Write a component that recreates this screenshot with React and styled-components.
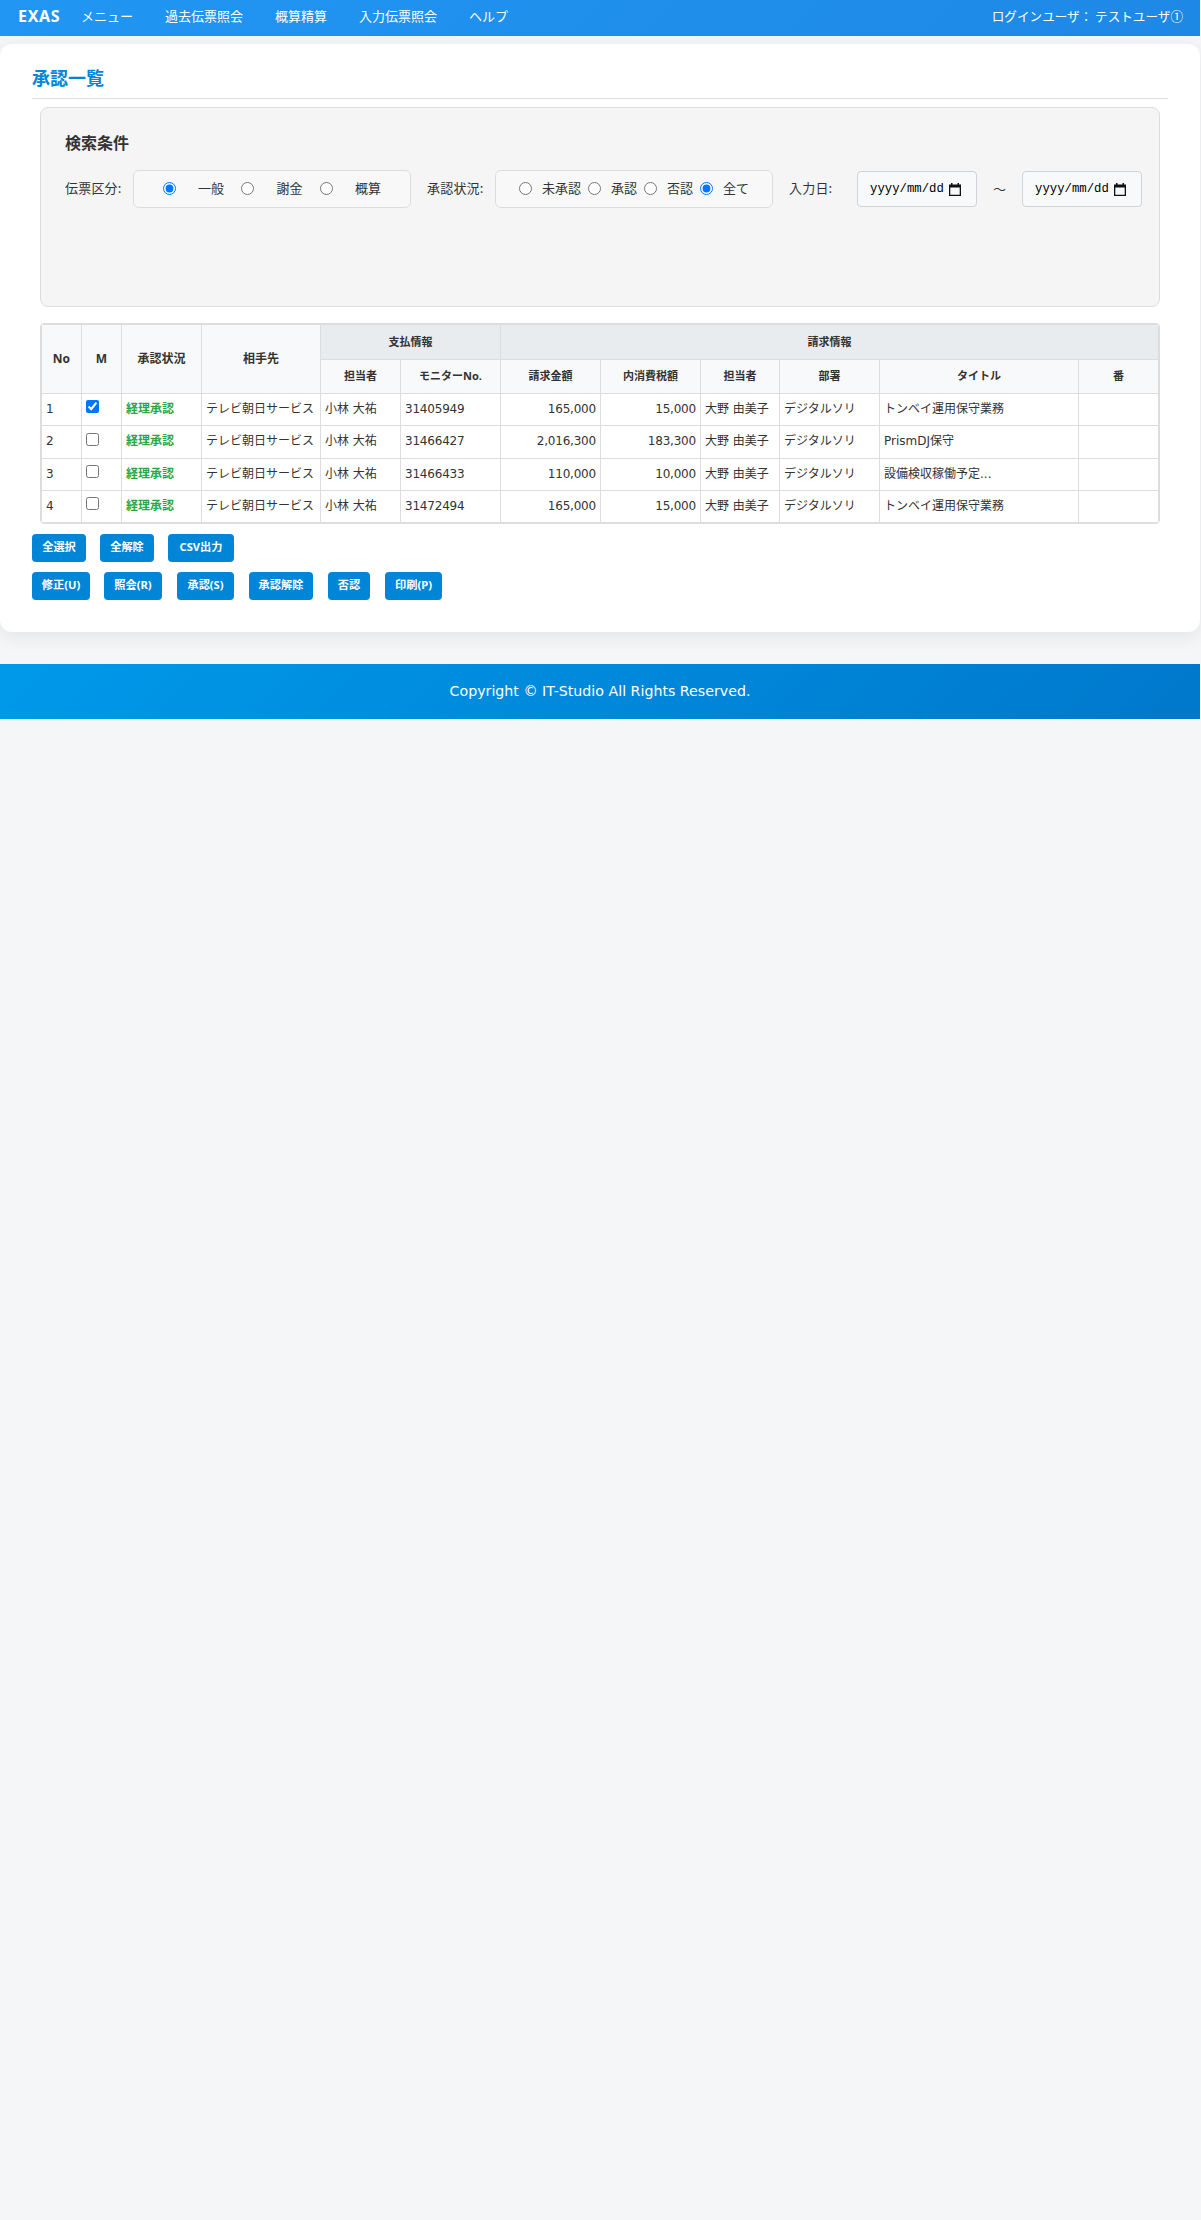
import React from 'react';
import styled, { createGlobalStyle } from 'styled-components';

const cjk = '"Noto Sans CJK JP", sans-serif';

const GlobalStyle = createGlobalStyle`
  * { box-sizing: border-box; }
  body {
    margin: 0;
    background: #f5f6f8;
    color: #333;
    font-family: "DejaVu Sans", ${cjk};
    font-size: 13px;
  }
`;

const Page = styled.div`
  width: 1200px;
  display: flex;
  flex-direction: column;
`;

const Header = styled.header`
  height: 36px;
  padding: 0 17px 4px 18px;
  display: flex;
  align-items: center;
  color: #fff;
  background: linear-gradient(135deg, #2196f3, #1e88e5);
  white-space: nowrap;
`;

const Brand = styled.div`
  width: 63px;
  font: 700 16px/32px "Noto Sans", sans-serif;
  letter-spacing: 0.7px;
`;

const Nav = styled.nav`
  display: flex;
  gap: 32px;
  flex: 1;
`;

const NavItem = styled.a`
  font: 400 13px/32px ${cjk};
`;

const LoginUser = styled.div`
  font: 400 12.6px/32px ${cjk};
  white-space: pre;
`;

const Card = styled.main`
  margin-top: 8px;
  height: 588px;
  padding: 0 32px;
  background: #fff;
  border-radius: 12px;
  box-shadow: 0 4px 20px rgba(0, 0, 0, 0.08);
`;

const Title = styled.h1`
  margin: 0 0 8px;
  height: 55px;
  padding-top: 18px;
  border-bottom: 1px solid #ddd;
  color: #0085d7;
  font: 700 18px/30px ${cjk};
`;

const SearchPanel = styled.section`
  margin: 0 8px;
  height: 200px;
  padding: 22px 17px 0 24px;
  border: 1px solid #ddd;
  border-radius: 8px;
  background: #f5f5f5;
`;

const PanelTitle = styled.h2`
  margin: 0 0 16px;
  font: 700 16px/24px ${cjk};
`;

const SearchRow = styled.div`
  display: flex;
  align-items: center;
  height: 38px;
  white-space: nowrap;
`;

const FieldLabel = styled.span`
  width: ${(p) => p.$width}px;
  padding-bottom: 2px;
  font: 400 13px/20px ${cjk};
  letter-spacing: 0.2px;
`;

const RadioBox = styled.div`
  width: 278px;
  height: 38px;
  margin-right: 16px;
  padding: 0 ${(p) => p.$pad}px 2px;
  display: flex;
  align-items: center;
  justify-content: space-between;
  border: 1px solid #ddd;
  border-radius: 6px;
  background: #f8f8f8;
`;

const RadioOption = styled.label`
  display: flex;
  align-items: center;
  gap: ${(p) => p.$gap}px;
  font: 400 13px/20px ${cjk};
  input {
    width: 13px;
    height: 13px;
    margin: 0;
  }
`;

const DateField = styled.div`
  width: 120px;
  height: 36px;
  padding: 0 15px 0 12px;
  display: flex;
  align-items: center;
  justify-content: space-between;
  border: 1px solid #ced4da;
  border-radius: 4px;
  background: #f8f9fa;
  color: #000;
  font: 400 12.3px/20px "Liberation Mono", monospace;
`;

const Tilde = styled.span`
  width: 45px;
  text-align: center;
  font: 400 13px/20px ${cjk};
`;

const TableFrame = styled.div`
  margin: 16px 8px 10px;
  border: 1px solid #ddd;
  border-radius: 4px;
  overflow: hidden;
`;

const Table = styled.table`
  width: 1118px;
  table-layout: fixed;
  border-collapse: separate;
  border-spacing: 0;
  border-left: 1px solid #ddd;
  border-top: 1px solid #ddd;
`;

const HeadRow = styled.tr`
  height: ${(p) => p.$height}px;
`;

const Th = styled.th`
  padding: 0 0 1px;
  border-right: 1px solid #ddd;
  border-bottom: 1px solid #ddd;
  background: ${(p) => (p.$group ? '#e9ecef' : '#f8f9fa')};
  font: 700 ${(p) => (p.rowSpan ? 12 : 11)}px/18px "Noto Sans", ${cjk};
`;

const BodyRow = styled.tr`
  height: ${(p) => p.$height}px;
`;

const Td = styled.td`
  padding: 0 4px 2px;
  border-right: 1px solid #ddd;
  border-bottom: 1px solid #ddd;
  font-size: 12px;
  line-height: 20px;
  letter-spacing: ${(p) => (p.$latin ? '-0.2px' : '0')};
  text-align: ${(p) => (p.$right ? 'right' : 'left')};
  white-space: nowrap;
`;

const Status = styled.span`
  color: #28a745;
  font-weight: 700;
`;

const Check = styled.input`
  display: block;
  width: 13px;
  height: 13px;
  margin: 0 0 4px;
`;

const ButtonRow = styled.div`
  display: flex;
  margin-bottom: 10px;
`;

const Button = styled.button`
  width: ${(p) => p.$width}px;
  height: 28px;
  margin-right: ${(p) => p.$after || 14}px;
  padding: 0 0 2px;
  border: 0;
  border-radius: 4px;
  background: #0085d7;
  color: #fff;
  font: 700 11.2px/20px "Noto Sans", ${cjk};
  white-space: nowrap;
`;

const Footer = styled.footer`
  margin-top: 32px;
  height: 55px;
  text-align: center;
  color: #fff;
  background: linear-gradient(135deg, #0099e9, #0078cc);
  font-size: 14.2px;
  line-height: 54px;
`;

const CalendarIcon = () => (
  <svg width="12" height="13" viewBox="0 0 12 13">
    <path d="M2 0h1.5v1.5h5V0H10v1.5h2V13H0V1.5h2zM1.3 4.5v7.2h9.4V4.5z" fill="#111" fillRule="evenodd" />
  </svg>
);

const DateInput = () => (
  <DateField>
    <span>yyyy/mm/dd</span>
    <CalendarIcon />
  </DateField>
);

const menu = ['メニュー', '過去伝票照会', '概算精算', '入力伝票照会', 'ヘルプ'];
const columns = [40, 40, 80, 119, 80, 100, 100, 100, 79, 100, 199, 80];
const subHeads = ['担当者', 'モニターNo.', '請求金額', '内消費税額', '担当者', '部署', 'タイトル', '番'];
const rows = [
  { no: '31405949', amount: '165,000', tax: '15,000', title: 'トンベイ運用保守業務', height: 32 },
  { no: '31466427', amount: '2,016,300', tax: '183,300', title: 'PrismDJ保守', height: 33 },
  { no: '31466433', amount: '110,000', tax: '10,000', title: '設備検収稼働予定...', height: 32 },
  { no: '31472494', amount: '165,000', tax: '15,000', title: 'トンベイ運用保守業務', height: 32 },
];

function Radios({ name, options, selected, gap, pad }) {
  return (
    <RadioBox $pad={pad}>
      {options.map((o) => (
        <RadioOption key={o} $gap={gap}>
          <input type="radio" name={name} defaultChecked={o === selected} />
          {o}
        </RadioOption>
      ))}
    </RadioBox>
  );
}

export default function App() {
  return (
    <Page>
      <GlobalStyle />
      <Header>
        <Brand>EXAS</Brand>
        <Nav>{menu.map((m) => <NavItem key={m}>{m}</NavItem>)}</Nav>
        <LoginUser>{'ログインユーザ： テストユーザ①'}</LoginUser>
      </Header>
      <Card>
        <Title>承認一覧</Title>
        <SearchPanel>
          <PanelTitle>検索条件</PanelTitle>
          <SearchRow>
            <FieldLabel $width={68}>伝票区分:</FieldLabel>
            <Radios name="kind" options={['一般', '謝金', '概算']} selected="一般" gap={22} pad={29} />
            <FieldLabel $width={68}>承認状況:</FieldLabel>
            <Radios name="state" options={['未承認', '承認', '否認', '全て']} selected="全て" gap={10} pad={23} />
            <FieldLabel $width={68}>入力日:</FieldLabel>
            <DateInput />
            <Tilde>～</Tilde>
            <DateInput />
          </SearchRow>
        </SearchPanel>
        <TableFrame>
          <Table>
            <colgroup>{columns.map((w, i) => <col key={i} style={{ width: w }} />)}</colgroup>
            <thead>
              <HeadRow $height={35}>
                <Th rowSpan={2}>No</Th>
                <Th rowSpan={2}>M</Th>
                <Th rowSpan={2}>承認状況</Th>
                <Th rowSpan={2}>相手先</Th>
                <Th $group colSpan={2}>支払情報</Th>
                <Th $group colSpan={6}>請求情報</Th>
              </HeadRow>
              <HeadRow $height={34}>{subHeads.map((h, i) => <Th key={i}>{h}</Th>)}</HeadRow>
            </thead>
            <tbody>
              {rows.map((r, i) => (
                <BodyRow key={r.no} $height={r.height}>
                  <Td>{i + 1}</Td>
                  <Td><Check type="checkbox" defaultChecked={i === 0} /></Td>
                  <Td><Status>経理承認</Status></Td>
                  <Td>テレビ朝日サービス</Td>
                  <Td>小林 大祐</Td>
                  <Td $latin>{r.no}</Td>
                  <Td $latin $right>{r.amount}</Td>
                  <Td $latin $right>{r.tax}</Td>
                  <Td>大野 由美子</Td>
                  <Td>デジタルソリ</Td>
                  <Td>{r.title}</Td>
                  <Td />
                </BodyRow>
              ))}
            </tbody>
          </Table>
        </TableFrame>
        <ButtonRow>
          <Button $width={54}>全選択</Button>
          <Button $width={54}>全解除</Button>
          <Button $width={66}>CSV出力</Button>
        </ButtonRow>
        <ButtonRow>
          <Button $width={58}>修正(U)</Button>
          <Button $width={58} $after={15}>照会(R)</Button>
          <Button $width={57} $after={15}>承認(S)</Button>
          <Button $width={64} $after={15}>承認解除</Button>
          <Button $width={42} $after={15}>否認</Button>
          <Button $width={57}>印刷(P)</Button>
        </ButtonRow>
      </Card>
      <Footer>Copyright © IT-Studio All Rights Reserved.</Footer>
    </Page>
  );
}
